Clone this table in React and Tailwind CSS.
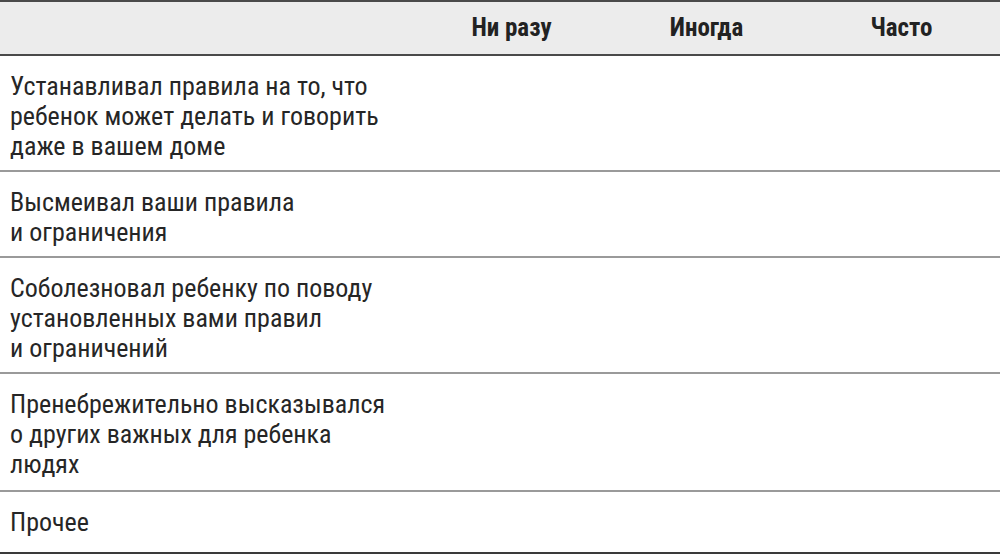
const rows = [
  { h: "h-[116px]", lines: ["Устанавливал правила на то, что", "ребенок может делать и говорить", "даже в вашем доме"] },
  { h: "h-[86px]", lines: ["Высмеивал ваши правила", "и ограничения"] },
  { h: "h-[116px]", lines: ["Соболезновал ребенку по поводу", "установленных вами правил", "и ограничений"] },
  { h: "h-[118px]", lines: ["Пренебрежительно высказывался", "о других важных для ребенка", "людях"] },
  { h: "h-[62px]", lines: ["Прочее"] },
];

const cols = ["Ни разу", "Иногда", "Часто"];

export default function App() {
  return (
    <div
      className="w-[1000px] h-[554px] bg-white text-[#222] overflow-hidden"
      style={{ fontFamily: '"Liberation Sans Narrow", "Roboto Condensed", "DejaVu Sans Condensed", sans-serif' }}
    >
      <div className="grid grid-cols-[414px_195px_195px_195px] h-[56px] bg-[#ececec] border-t-2 border-b-2 border-[#4a4a4a] items-center">
        <div />
        {cols.map((c) => (
          <div key={c} className="text-center text-[25px] font-bold leading-[30px]">
            {c}
          </div>
        ))}
      </div>

      {rows.map((row, i) => (
        <div
          key={i}
          className={
            "grid grid-cols-[414px_195px_195px_195px] pt-[15px] " +
            row.h +
            (i === rows.length - 1 ? " border-b-2 border-[#3a3a3a]" : " border-b-2 border-[#9a9a9a]")
          }
        >
          <div className="pl-[10px] text-[26px] leading-[30px] text-[#262626]">
            {row.lines.map((l) => (
              <div key={l}>{l}</div>
            ))}
          </div>
          <div />
          <div />
          <div />
        </div>
      ))}
    </div>
  );
}
